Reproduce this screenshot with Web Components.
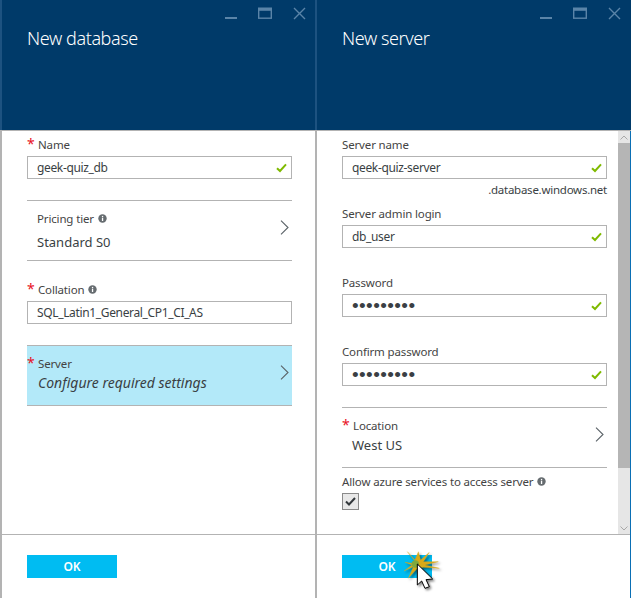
<!DOCTYPE html>
<html>
<head>
<meta charset="utf-8">
<title>New database</title>
<style>
  html, body { margin: 0; height: 598px; overflow: hidden; background: #fff; }
  body { position: relative; display: flex; font-family: "Noto Sans", "Open Sans", sans-serif; color: #3a3a3a; }
</style>
</head>
<body>
<az-blade title="New database" class="first">
  <az-field label="Name" required style="margin-top:6px">
    <az-textbox value="geek-quiz_db" valid></az-textbox>
  </az-field>
  <az-selector label="Pricing tier" value="Standard S0" info wide style="margin-top:21px"></az-selector>
  <az-field label="Collation" required info style="margin-top:21px">
    <az-textbox value="SQL_Latin1_General_CP1_CI_AS"></az-textbox>
  </az-field>
  <az-selector label="Server" value="Configure required settings" required active style="margin-top:21px"></az-selector>
  <az-button slot="footer">OK</az-button>
</az-blade>
<az-blade title="New server" class="second" scroll>
  <az-field label="Server name" style="margin-top:6px">
    <az-textbox value="qeek-quiz-server" valid></az-textbox>
  </az-field>
  <az-note>.database.windows.net</az-note>
  <az-field label="Server admin login" style="margin-top:9px">
    <az-textbox value="db_user" valid></az-textbox>
  </az-field>
  <az-field label="Password" style="margin-top:27px">
    <az-textbox value="•••••••••" secret valid></az-textbox>
  </az-field>
  <az-field label="Confirm password" style="margin-top:27px">
    <az-textbox value="•••••••••" secret valid></az-textbox>
  </az-field>
  <az-selector label="Location" value="West US" required style="margin-top:21px"></az-selector>
  <az-field label="Allow azure services to access server" info style="margin-top:6px">
    <az-checkbox></az-checkbox>
  </az-field>
  <az-button slot="footer">OK</az-button>
</az-blade>
<az-click-cursor></az-click-cursor>

<script>
const INFO_ICON = `<svg width="9" height="9" viewBox="0 0 9 9" aria-hidden="true"><circle cx="4.5" cy="4.5" r="4.2" fill="#666c70"/><rect x="3.9" y="3.7" width="1.3" height="3.3" fill="#fff"/><rect x="3.9" y="1.9" width="1.3" height="1.2" fill="#fff"/></svg>`;

class AzBlade extends HTMLElement {
  constructor() {
    super();
    this.attachShadow({ mode: 'open' });
  }

  connectedCallback() {
    const isFirst = this.classList.contains('first');
    const scrollbar = this.hasAttribute('scroll') ? '<az-scrollbar></az-scrollbar>' : '';
    this.shadowRoot.innerHTML = `
      <style>
        :host {
          display: flex;
          flex-direction: column;
          box-sizing: border-box;
          height: 598px;
          width: ${isFirst ? 317 : 314}px;
          flex: none;
          background: #fff;
          border-left: ${isFirst ? '2px solid #b3b3b3' : 'none'};
          border-right: ${isFirst ? '2px solid #b3b3b3' : '1px solid #0a6fb5'};
        }
        header {
          position: relative;
          box-sizing: border-box;
          height: 131px;
          flex: none;
          margin-left: ${isFirst ? '-2px' : '0'};
          margin-right: ${isFirst ? '-2px' : '-1px'};
          padding: 26px 0 0 ${isFirst ? 27 : 25}px;
          background: #003a69;
          border-bottom: 1px solid #b3b3b3;
          box-shadow: ${isFirst ? 'inset 2px 0 0 #1d5280, inset -2px 0 0 #1d5280' : 'none'};
          color: #fff;
          font-size: 18px;
          font-weight: 300;
          letter-spacing: -0.4px;
          line-height: 25px;
        }
        .controls {
          position: absolute;
          top: 7px;
          left: ${isFirst ? 224 : 222}px;
          display: flex;
          gap: 19px;
        }
        .body {
          flex: 1;
          min-height: 0;
          display: flex;
        }
        .scroller {
          flex: 1;
          min-width: 0;
          box-sizing: border-box;
          padding: 0 ${isFirst ? 23 : 11}px 0 25px;
        }
        footer {
          box-sizing: border-box;
          height: 64px;
          flex: none;
          padding: 20px 0 0 25px;
          border-top: 1px solid #b3b3b3;
        }
      </style>
      <header>
        ${this.getAttribute('title')}
        <div class="controls">
          <svg width="14" height="13" viewBox="0 0 14 13"><rect x="1" y="10" width="12" height="2" fill="#5a84a8"/></svg>
          <svg width="15" height="13" viewBox="0 0 15 13"><rect x="1.7" y="1.2" width="12.6" height="10" fill="none" stroke="#5a84a8" stroke-width="1.4"/><rect x="1" y="1" width="14" height="2.8" fill="#5a84a8"/></svg>
          <svg width="13" height="13" viewBox="0 0 13 13" style="margin-left:2px"><path d="M1 1 L12 12 M12 1 L1 12" stroke="#5a84a8" stroke-width="1.4" fill="none"/></svg>
        </div>
      </header>
      <div class="body">
        <div class="scroller"><slot></slot></div>
        ${scrollbar}
      </div>
      <footer><slot name="footer"></slot></footer>
    `;
    this.removeAttribute('title');
  }
}

class AzField extends HTMLElement {
  constructor() {
    super();
    this.attachShadow({ mode: 'open' });
  }

  connectedCallback() {
    const required = this.hasAttribute('required');
    this.shadowRoot.innerHTML = `
      <style>
        :host { display: block; }
        .label {
          display: flex;
          align-items: center;
          box-sizing: border-box;
          height: 17px;
          padding-bottom: 2px;
          margin-bottom: 2px;
          font-size: 11.5px;
          letter-spacing: -0.15px;
          line-height: 15px;
          color: #444;
          white-space: nowrap;
        }
        .star {
          width: 11px;
          flex: none;
          color: #e81123;
          font-size: 14px;
          line-height: 14px;
          margin-top: -1px;
        }
        svg { margin-left: 4px; }
      </style>
      <div class="label">
        ${required ? '<span class="star">*</span>' : ''}
        <span>${this.getAttribute('label')}</span>
        ${this.hasAttribute('info') ? INFO_ICON : ''}
      </div>
      <slot></slot>
    `;
  }
}

class AzTextbox extends HTMLElement {
  constructor() {
    super();
    this.attachShadow({ mode: 'open' });
  }

  connectedCallback() {
    const secret = this.hasAttribute('secret');
    this.shadowRoot.innerHTML = `
      <style>
        :host {
          display: flex;
          align-items: center;
          justify-content: space-between;
          box-sizing: border-box;
          height: 23px;
          padding: 0 4px 0 9px;
          border: 1px solid #b3b3b3;
          background: #fff;
          font-size: 12px;
          letter-spacing: -0.35px;
          color: #3a3f44;
          white-space: nowrap;
        }
        .secret { font-family: "Liberation Sans", sans-serif; font-size: 19px; letter-spacing: 0.4px; line-height: 20px; }
      </style>
      <span class="${secret ? 'secret' : ''}">${this.getAttribute('value')}</span>
      ${this.hasAttribute('valid') ? `<svg width="11" height="10" viewBox="0 0 11 10" style="flex:none"><path d="M1 5.2 L4 8 L10 1.4" fill="none" stroke="#7fba00" stroke-width="2"/></svg>` : ''}
    `;
  }
}

class AzSelector extends HTMLElement {
  constructor() {
    super();
    this.attachShadow({ mode: 'open' });
  }

  connectedCallback() {
    const required = this.hasAttribute('required');
    const active = this.hasAttribute('active');
    const wide = this.hasAttribute('wide');
    this.shadowRoot.innerHTML = `
      <style>
        :host {
          display: flex;
          align-items: center;
          box-sizing: border-box;
          height: 61px;
          padding: 0 3px 0 ${required ? 0 : 10}px;
          border-top: 1px solid #b3b3b3;
          border-bottom: 1px solid #b3b3b3;
          background: ${active ? '#b3e9f9' : 'transparent'};
          white-space: nowrap;
        }
        .text { flex: 1; min-width: 0; margin-top: ${wide ? 1 : -3}px; }
        .label { display: flex; align-items: center; height: 17px; font-size: 11.5px; letter-spacing: -0.15px; color: #444; line-height: 17px; }
        .star { width: 11px; flex: none; color: #e81123; font-size: 14px; line-height: 14px; margin-top: -1px; }
        .value {
          font-size: ${active ? 14 : 13}px;
          line-height: 20px;
          margin-top: ${wide ? 5 : 1}px;
          color: #3a3f44;
          ${active ? 'font-style: italic;' : ''}
          ${required && !active ? 'margin-left: 10px;' : ''}
          ${active ? 'margin-left: 11px;' : ''}
        }
        svg.info { margin-left: 4px; }
        svg.chev { flex: none; margin-bottom: 6px; }
      </style>
      <div class="text">
        <div class="label">
          ${required ? '<span class="star">*</span>' : ''}
          <span>${this.getAttribute('label')}</span>
          ${this.hasAttribute('info') ? INFO_ICON.replace('<svg', '<svg class="info"') : ''}
        </div>
        <div class="value">${this.getAttribute('value')}</div>
      </div>
      <svg class="chev" width="9" height="15" viewBox="0 0 9 15"><path d="M1 0.7 L8 7.5 L1 14.3" fill="none" stroke="#5b6368" stroke-width="1.1"/></svg>
    `;
  }
}

class AzNote extends HTMLElement {
  constructor() {
    super();
    this.attachShadow({ mode: 'open' }).innerHTML = `
      <style>
        :host { display: block; height: 15px; margin-top: 3px; text-align: right; font-size: 11.5px; letter-spacing: -0.25px; line-height: 15px; color: #3a3f44; }
      </style>
      <slot></slot>
    `;
  }
}

class AzCheckbox extends HTMLElement {
  constructor() {
    super();
    this.attachShadow({ mode: 'open' }).innerHTML = `
      <style>
        :host { display: block; box-sizing: border-box; width: 17px; height: 17px; border: 1px solid #8a8a8a; background: #e8e8e8; }
        svg { display: block; }
      </style>
      <svg width="15" height="15" viewBox="0 0 15 15"><path d="M3 7.5 L6 10.5 L12 4" fill="none" stroke="#33383c" stroke-width="2"/></svg>
    `;
  }
}

class AzButton extends HTMLElement {
  constructor() {
    super();
    this.attachShadow({ mode: 'open' }).innerHTML = `
      <style>
        :host {
          display: flex; align-items: center; justify-content: center;
          width: 90px; height: 23px;
          background: #00bcf2; color: #fff;
          font-size: 12px; font-weight: 600;
        }
      </style>
      <slot></slot>
    `;
  }
}

class AzScrollbar extends HTMLElement {
  constructor() {
    super();
    this.attachShadow({ mode: 'open' }).innerHTML = `
      <style>
        :host { display: flex; flex-direction: column; flex: none; width: 12px; background: #e6e6e6; }
        .arrow { height: 12px; flex: none; display: flex; align-items: center; justify-content: center; }
        .thumb { height: 325px; flex: none; background: #b5b5b5; }
        .track { flex: 1; }
      </style>
      <div class="arrow"><svg width="8" height="5" viewBox="0 0 8 5"><path d="M0.5 4.5 L4 1 L7.5 4.5" fill="none" stroke="#a8a8a8"/></svg></div>
      <div class="thumb"></div>
      <div class="track"></div>
      <div class="arrow"><svg width="8" height="5" viewBox="0 0 8 5"><path d="M0.5 0.5 L4 4 L7.5 0.5" fill="none" stroke="#a8a8a8"/></svg></div>
    `;
  }
}

// screen recording click marker, sits over the second OK button
class AzClickCursor extends HTMLElement {
  constructor() {
    super();
    this.attachShadow({ mode: 'open' }).innerHTML = `
      <style>
        :host { position: absolute; left: 380px; top: 535px; width: 80px; height: 63px; pointer-events: none; }
        svg { display: block; overflow: visible; }
        g { filter: drop-shadow(5px 5px 3px rgba(0,0,0,.5)); }
      </style>
      <svg width="80" height="63" viewBox="0 0 240 189">
        <g>
          <path d="M112 87 L82 50 L105 75 L115 50 L122 75 L148 52 L130 80 L175 80 L135 90 L178 100 L130 97 L112 100 L85 130 L100 95 L72 108 L96 90 L75 82 Z" fill="#d8a918" stroke="#d8a918" stroke-width="1"/>
          <circle cx="106" cy="87" r="11" fill="#7fa83e"/>
          <path d="M112 87 L112 150 L125 138 L135 160 L148 155 L138 134 L158 132 Z" fill="#fff" stroke="#000" stroke-width="3" stroke-linejoin="miter"/>
        </g>
      </svg>
    `;
  }
}

customElements.define('az-blade', AzBlade);
customElements.define('az-field', AzField);
customElements.define('az-textbox', AzTextbox);
customElements.define('az-selector', AzSelector);
customElements.define('az-note', AzNote);
customElements.define('az-checkbox', AzCheckbox);
customElements.define('az-button', AzButton);
customElements.define('az-scrollbar', AzScrollbar);
customElements.define('az-click-cursor', AzClickCursor);
</script>
</body>
</html>
